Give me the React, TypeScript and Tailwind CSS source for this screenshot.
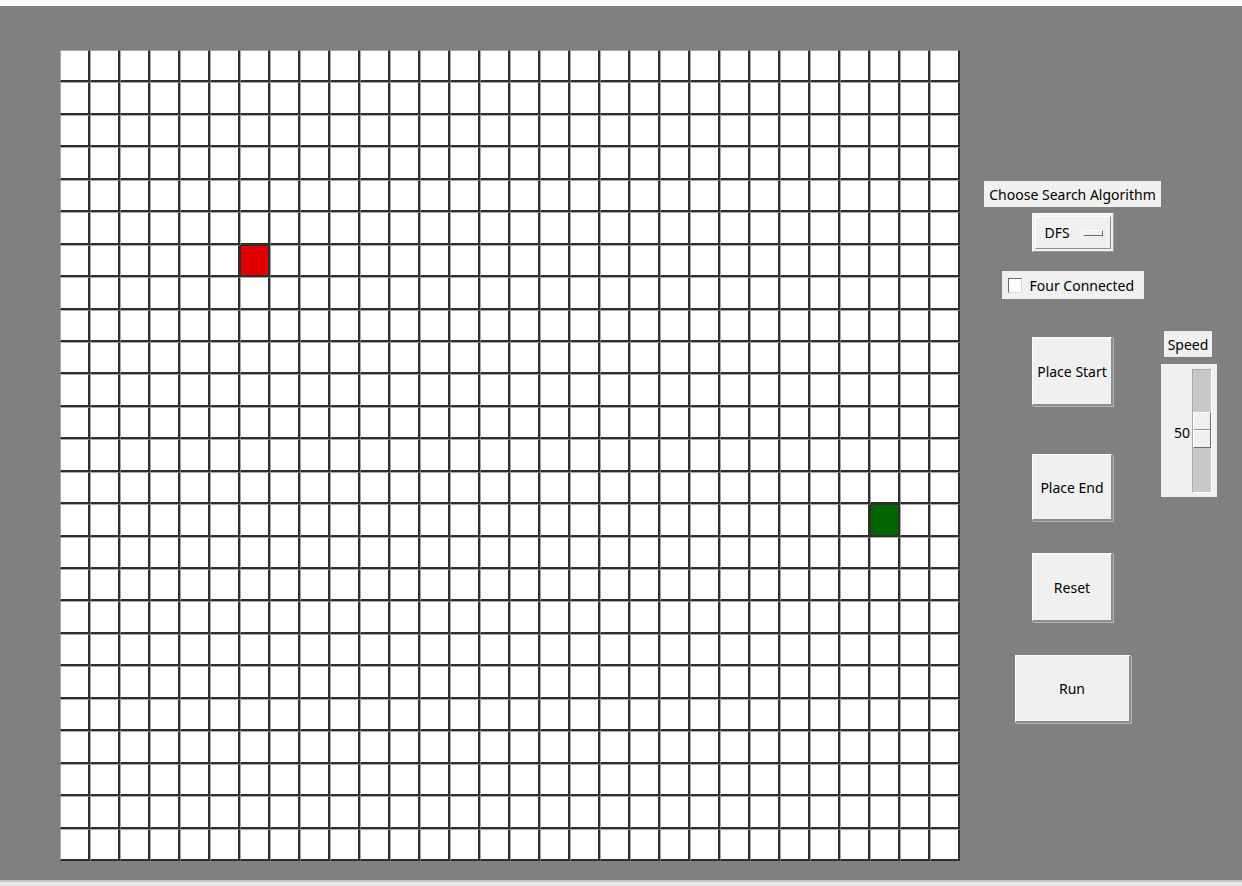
const COLS = 30;
const ROWS = 25;
const START = { r: 6, c: 6 };
const END = { r: 14, c: 27 };

const font = { fontFamily: '"Noto Sans", "Open Sans", sans-serif' };

function Cell({ r, c }: { r: number; c: number }) {
  const isStart = r === START.r && c === START.c;
  const isEnd = r === END.r && c === END.c;
  if (isStart || isEnd) {
    return (
      <div
        className={`border-l border-t border-r-2 border-b-2 border-[#2e2e2e] ${
          isStart ? "bg-[#e00000]" : "bg-[#006400]"
        }`}
      />
    );
  }
  return (
    <div className="bg-white border-l border-t border-l-[#a8a8a8] border-t-[#a8a8a8] border-r-2 border-b-2 border-r-[#2e2e2e] border-b-[#2e2e2e]" />
  );
}

function TkButton({ label, className }: { label: string; className: string }) {
  return (
    <button
      className={`bg-[#f0f0f0] text-black text-[14px] border-t border-l border-t-white border-l-white border-r-2 border-b-2 border-r-[#8c8c8c] border-b-[#8c8c8c] shadow-[1px_1px_0_#b4b4b4] ${className}`}
    >
      {label}
    </button>
  );
}

export default function App() {
  const cells = [];
  for (let r = 0; r < ROWS; r++) {
    for (let c = 0; c < COLS; c++) {
      cells.push(<Cell key={`${r}-${c}`} r={r} c={c} />);
    }
  }

  return (
    <div className="w-[1242px] h-[886px] flex flex-col bg-[#f0f0f0]" style={font}>
      <div className="h-[6px] bg-[#fbfbfb]" />
      <div className="h-[874px] bg-[#808080] flex">
        {/* board */}
        <div className="pl-[60px] pt-[44px]">
          <div className="w-[900px] h-[811px] grid grid-cols-[repeat(30,30px)] grid-rows-[repeat(25,minmax(0,1fr))]">
            {cells}
          </div>
        </div>

        {/* controls */}
        <div className="flex pl-[24px]">
          <div className="w-[177px] flex flex-col items-center pt-[175px]">
            <div className="h-[26px] w-[177px] bg-[#f0f0f0] flex items-center justify-center text-[14px] text-black">
              Choose Search Algorithm
            </div>
            <div className="mt-[6px] h-[39px] w-[82px] bg-[#f0f0f0] border border-white border-r-[#9a9a9a] border-b-[#9a9a9a] p-[2px]">
              <div className="h-full w-full border border-white border-r-[#8c8c8c] border-b-[#8c8c8c] flex items-center pl-[9px] text-[14px] text-black">
                <span>DFS</span>
                <span className="ml-[13px] mt-[1px] w-[20px] h-[6px] bg-[#f0f0f0] border border-white border-r-[#6a6a6a] border-b-[#6a6a6a]" />
              </div>
            </div>
            <div className="mt-[19px] h-[28px] w-[142px] bg-[#f0f0f0] flex items-center pl-[6px] text-[14px] text-black">
              <span className="w-[14px] h-[15px] bg-white border border-[#6a6a6a] border-r-[#d8d8d8] border-b-[#d8d8d8]" />
              <span className="ml-[8px]">Four Connected</span>
            </div>
            <TkButton label="Place Start" className="mt-[38px] h-[69px] w-[81px]" />
            <TkButton label="Place End" className="mt-[48px] h-[67px] w-[81px]" />
            <TkButton label="Reset" className="mt-[32px] h-[69px] w-[81px]" />
            <TkButton label="Run" className="mt-[33px] h-[68px] w-[116px]" />
          </div>

          <div className="w-[56px] flex flex-col pt-[325px]">
            <div className="ml-[3px] h-[26px] w-[48px] bg-[#f0f0f0] flex items-center justify-center text-[14px] text-black">
              Speed
            </div>
            <div className="mt-[7px] h-[133px] w-[56px] bg-[#f0f0f0] flex pt-[5px]">
              <div className="w-[31px] flex flex-col items-end pr-[2px] pt-[57px] text-[14px] text-black leading-none">
                50
              </div>
              <div className="w-[20px] h-[124px] bg-[#c8c8c8] border border-[#a8a8a8] border-r-white border-b-white flex flex-col pt-[42px]">
                <div className="w-[18px] h-[36px] bg-[#f0f0f0] border border-white border-r-[#6a6a6a] border-b-[#6a6a6a] flex flex-col">
                  <div className="flex-1 border-b border-b-[#8c8c8c]" />
                  <div className="flex-1 border-t border-t-white" />
                </div>
              </div>
            </div>
          </div>
        </div>
      </div>
      <div className="h-[6px] bg-[#e8e8e8] border-t-2 border-t-[#c4c4c4]" />
    </div>
  );
}
